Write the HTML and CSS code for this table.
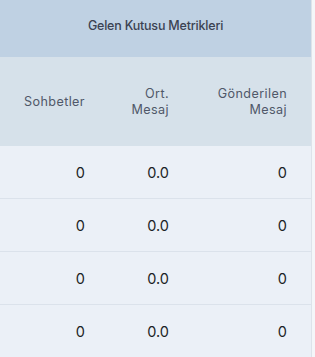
FILE: index.html
```html
<!DOCTYPE html>
<html lang="tr">
<head>
<meta charset="utf-8">
<link rel="stylesheet" href="styles.css">
</head>
<body>
<div class="table">
  <div class="title">Gelen Kutusu Metrikleri</div>
  <div class="row head">
    <div class="cell">Sohbetler</div>
    <div class="cell">Ort.<br>Mesaj</div>
    <div class="cell last">Gönderilen<br>Mesaj</div>
  </div>
  <div class="row data">
    <div class="cell">0</div><div class="cell">0.0</div><div class="cell last">0</div>
  </div>
  <div class="row data">
    <div class="cell">0</div><div class="cell">0.0</div><div class="cell last">0</div>
  </div>
  <div class="row data">
    <div class="cell">0</div><div class="cell">0.0</div><div class="cell last">0</div>
  </div>
  <div class="row data">
    <div class="cell">0</div><div class="cell">0.0</div><div class="cell last">0</div>
  </div>
</div>
</body>
</html>
```
FILE: styles.css
```css
html, body {
  margin: 0;
  padding: 0;
  background: #f4f6f9;
  font-family: Inter, "Noto Sans", sans-serif;
}
.table {
  width: 311px;
  border-right: 1px solid #dde3ea;
  height: 357px;
  overflow: hidden;
}
.title {
  height: 57px;
  background: #bfd1e3;
  display: flex;
  align-items: center;
  justify-content: center;
  font-size: 12.5px;
  font-weight: 500;
  color: #3b4252;
  letter-spacing: -0.2px;
  padding-bottom: 6px;
  box-sizing: border-box;
}
.row {
  display: grid;
  grid-template-columns: 101px 84px 1fr;
}
.cell {
  text-align: right;
  padding-right: 16px;
}
.cell.last {
  padding-right: 24px;
}
.head {
  height: 89px;
  background: #d6e1ea;
  align-items: center;
  font-size: 12.6px;
  line-height: 16px;
  color: #505869;
  letter-spacing: 0.4px;
}
.data {
  height: 52px;
  background: #ebf0f7;
  border-bottom: 1px solid #dbe2eb;
  align-items: center;
  font-size: 14.5px;
  color: #1c1f26;
}
```
